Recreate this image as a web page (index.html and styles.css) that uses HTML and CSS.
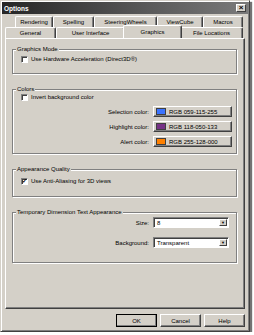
FILE: index.html
```html
<!DOCTYPE html>
<html>
<head>
    <title>Options</title>
    <link rel="stylesheet" href="styles.css">
</head>
<body>
    <div class="window">
        <div class="titlebar">
            <span class="title">Options</span>
            <span class="close">×</span>
        </div>

        <!-- Onglets -->
        <div class="tabs">
            <div class="tab-row back">
                <div class="tab t-rendering">Rendering</div>
                <div class="tab t-spelling">Spelling</div>
                <div class="tab t-steering">SteeringWheels</div>
                <div class="tab t-viewcube">ViewCube</div>
                <div class="tab t-macros">Macros</div>
            </div>
            <div class="tab-row front">
                <div class="tab t-general">General</div>
                <div class="tab t-ui">User Interface</div>
                <div class="tab t-graphics active">Graphics</div>
                <div class="tab t-files">File Locations</div>
            </div>
        </div>

        <div class="panel">
            <div class="group g-mode">
                <span class="legend">Graphics Mode</span>
                <label class="check"><span class="box"></span>Use Hardware Acceleration (Direct3D®)</label>
            </div>

            <div class="group g-colors">
                <span class="legend">Colors</span>
                <label class="check"><span class="box"></span>Invert background color</label>
                <div class="field">
                    <span class="field-label">Selection color:</span>
                    <button class="color-btn"><span class="swatch blue"></span>RGB 059-115-255</button>
                </div>
                <div class="field">
                    <span class="field-label">Highlight color:</span>
                    <button class="color-btn"><span class="swatch purple"></span>RGB 118-050-133</button>
                </div>
                <div class="field">
                    <span class="field-label">Alert color:</span>
                    <button class="color-btn"><span class="swatch orange"></span>RGB 255-128-000</button>
                </div>
            </div>

            <div class="group g-quality">
                <span class="legend">Appearance Quality</span>
                <label class="check"><span class="box checked">✓</span>Use Anti-Aliasing for 3D views</label>
            </div>

            <div class="group g-temp">
                <span class="legend">Temporary Dimension Text Appearance</span>
                <div class="field">
                    <span class="field-label">Size:</span>
                    <div class="combo"><span class="combo-text">8</span><span class="combo-arrow">▼</span></div>
                </div>
                <div class="field">
                    <span class="field-label">Background:</span>
                    <div class="combo"><span class="combo-text">Transparent</span><span class="combo-arrow">▼</span></div>
                </div>
            </div>
        </div>

        <div class="actions">
            <button class="btn default">OK</button>
            <button class="btn">Cancel</button>
            <button class="btn">Help</button>
        </div>
    </div>
</body>
</html>
```

FILE: styles.css
```css
* { box-sizing: border-box; }
body { margin: 0; background: #fff; font-family: "Liberation Sans", Arial, sans-serif; font-size: 6px; color: #000; }

.window { width: 250px; height: 332px; background: #d4d0c8; border: 1px solid; border-color: #d4d0c8 #404040 #404040 #d4d0c8; box-shadow: inset 1px 1px #fff, inset -1px -1px #808080, 2px 2px 1px rgba(0,0,0,0.55); padding: 1px 4px 0 4px; }

.titlebar { height: 12px; margin: 0 -3px; background: linear-gradient(to right, #262626, #5a5a5a 60%, #7a7a7a); display: flex; align-items: center; justify-content: space-between; padding: 0 2px 0 2px; }
.title { color: #fff; font-weight: bold; font-size: 6.5px; }
.close { width: 10px; height: 8px; background: #d4d0c8; border: 1px solid; border-color: #fff #404040 #404040 #fff; font-size: 8px; line-height: 6px; text-align: center; font-weight: bold; }

.tabs { margin-top: 2px; }
.tab-row { display: flex; height: 11px; }
.tab-row.back { padding-left: 10px; }
.tab { height: 11px; border: 1px solid; border-bottom: none; border-color: #fff #404040 #404040 #fff; border-radius: 2px 2px 0 0; box-shadow: inset -1px 0 #808080; text-align: center; line-height: 10px; }
.tab-row.front { position: relative; z-index: 1; }
.tab.active { height: 13px; margin: -2px -2px 0 -2px; background: #d4d0c8; line-height: 12px; position: relative; z-index: 2; }

.t-rendering { width: 38px; }
.t-spelling { width: 41px; }
.t-steering { width: 63px; }
.t-viewcube { width: 46px; }
.t-macros { width: 40px; }
.t-general { width: 51px; }
.t-ui { width: 69px; }
.t-graphics { width: 59px; }
.t-files { width: 63px; }

.panel { width: 240px; height: 271px; border: 1px solid; border-color: #fff #404040 #404040 #fff; box-shadow: inset -1px -1px #808080; padding: 10px 7px 0 6px; }

.group { border: 1px solid #808080; box-shadow: inset 1px 1px #fff, 1px 1px #fff; width: 225px; margin-bottom: 15px; }
.legend { display: block; width: max-content; background: #d4d0c8; margin: -4px 0 0 3px; padding: 0 1px; line-height: 7px; }
.g-mode { height: 25px; }
.g-mode .check { margin-top: 2px; }
.g-colors { height: 65px; }
.g-colors .check { margin-top: 0; }
.g-colors .field { margin-top: 4px; }
.g-colors .field:first-of-type { margin-top: 5px; }
.g-quality { height: 28px; }
.g-quality .check { margin-top: 4px; }
.g-temp { height: 51px; }
.g-temp .field { margin-top: 1px; }
.g-temp .field + .field { margin-top: 9px; }

.check { display: flex; align-items: center; gap: 3px; padding-left: 8px; height: 8px; }
.box { width: 7px; height: 7px; background: #fff; border: 1px solid; border-color: #808080 #fff #fff #808080; box-shadow: inset 1px 1px #404040; font-size: 6px; line-height: 5px; text-align: center; font-weight: bold; }

.field { display: flex; align-items: center; height: 11px; }
.field-label { flex: 1; text-align: right; padding-right: 4px; }

.color-btn { width: 79px; height: 11px; margin-right: 4px; padding: 0 2px; display: flex; align-items: center; gap: 3px; font: inherit; background: #d4d0c8; border: 1px solid; border-color: #fff #404040 #404040 #fff; box-shadow: inset -1px -1px #808080; }
.swatch { width: 10px; height: 7px; border: 1px solid #404040; }
.blue { background: rgb(59,115,255); }
.purple { background: rgb(118,50,133); }
.orange { background: rgb(255,128,0); }

.combo { width: 76px; height: 11px; margin-right: 7px; display: flex; background: #fff; border: 1px solid; border-color: #808080 #fff #fff #808080; box-shadow: inset 1px 1px #404040; padding: 1px; }
.combo-text { flex: 1; padding-left: 2px; line-height: 8px; }
.combo-arrow { width: 8px; background: #d4d0c8; border: 1px solid; border-color: #fff #404040 #404040 #fff; font-size: 4px; line-height: 6px; text-align: center; }

.actions { display: flex; justify-content: flex-end; gap: 3px; margin-top: 5px; padding-right: 0; }
.btn { width: 41px; height: 13px; font: inherit; background: #d4d0c8; border: 1px solid; border-color: #fff #404040 #404040 #fff; box-shadow: inset -1px -1px #808080; padding: 0; }
.btn.default { outline: 1px solid #000; outline-offset: -1px; }
```
